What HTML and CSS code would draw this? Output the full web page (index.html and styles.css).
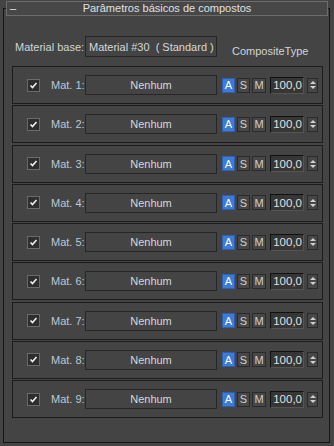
FILE: index.html
```html
<!DOCTYPE html>
<html>
<head>
<meta charset="utf-8">
<link rel="stylesheet" href="styles.css">
</head>
<body>
<div class="frame">
  <div class="title"><span class="dash">–</span><span class="title-text">Parâmetros básicos de compostos</span></div>
  <div class="base-row">
    <span class="base-label">Material base:</span>
    <span class="btn base-btn">Material #30 &nbsp;( Standard )</span>
    <span class="ctype">CompositeType</span>
  </div>
  <div class="list">
    <div class="row"><span class="chk"><svg viewBox="0 0 11 11" width="11" height="11"><polyline points="2.5,5.5 4.5,7.5 8.5,3" fill="none" stroke="#f0f0f0" stroke-width="1.6"/></svg></span><span class="lbl">Mat. 1:</span><span class="btn mat">Nenhum</span><span class="ab on">A</span><span class="ab">S</span><span class="ab m">M</span><span class="num">100,0</span><span class="spin"><i class="up"></i><i class="dn"></i></span></div>
    <div class="row"><span class="chk"><svg viewBox="0 0 11 11" width="11" height="11"><polyline points="2.5,5.5 4.5,7.5 8.5,3" fill="none" stroke="#f0f0f0" stroke-width="1.6"/></svg></span><span class="lbl">Mat. 2:</span><span class="btn mat">Nenhum</span><span class="ab on">A</span><span class="ab">S</span><span class="ab m">M</span><span class="num">100,0</span><span class="spin"><i class="up"></i><i class="dn"></i></span></div>
    <div class="row"><span class="chk"><svg viewBox="0 0 11 11" width="11" height="11"><polyline points="2.5,5.5 4.5,7.5 8.5,3" fill="none" stroke="#f0f0f0" stroke-width="1.6"/></svg></span><span class="lbl">Mat. 3:</span><span class="btn mat">Nenhum</span><span class="ab on">A</span><span class="ab">S</span><span class="ab m">M</span><span class="num">100,0</span><span class="spin"><i class="up"></i><i class="dn"></i></span></div>
    <div class="row"><span class="chk"><svg viewBox="0 0 11 11" width="11" height="11"><polyline points="2.5,5.5 4.5,7.5 8.5,3" fill="none" stroke="#f0f0f0" stroke-width="1.6"/></svg></span><span class="lbl">Mat. 4:</span><span class="btn mat">Nenhum</span><span class="ab on">A</span><span class="ab">S</span><span class="ab m">M</span><span class="num">100,0</span><span class="spin"><i class="up"></i><i class="dn"></i></span></div>
    <div class="row"><span class="chk"><svg viewBox="0 0 11 11" width="11" height="11"><polyline points="2.5,5.5 4.5,7.5 8.5,3" fill="none" stroke="#f0f0f0" stroke-width="1.6"/></svg></span><span class="lbl">Mat. 5:</span><span class="btn mat">Nenhum</span><span class="ab on">A</span><span class="ab">S</span><span class="ab m">M</span><span class="num">100,0</span><span class="spin"><i class="up"></i><i class="dn"></i></span></div>
    <div class="row"><span class="chk"><svg viewBox="0 0 11 11" width="11" height="11"><polyline points="2.5,5.5 4.5,7.5 8.5,3" fill="none" stroke="#f0f0f0" stroke-width="1.6"/></svg></span><span class="lbl">Mat. 6:</span><span class="btn mat">Nenhum</span><span class="ab on">A</span><span class="ab">S</span><span class="ab m">M</span><span class="num">100,0</span><span class="spin"><i class="up"></i><i class="dn"></i></span></div>
    <div class="row"><span class="chk"><svg viewBox="0 0 11 11" width="11" height="11"><polyline points="2.5,5.5 4.5,7.5 8.5,3" fill="none" stroke="#f0f0f0" stroke-width="1.6"/></svg></span><span class="lbl">Mat. 7:</span><span class="btn mat">Nenhum</span><span class="ab on">A</span><span class="ab">S</span><span class="ab m">M</span><span class="num">100,0</span><span class="spin"><i class="up"></i><i class="dn"></i></span></div>
    <div class="row"><span class="chk"><svg viewBox="0 0 11 11" width="11" height="11"><polyline points="2.5,5.5 4.5,7.5 8.5,3" fill="none" stroke="#f0f0f0" stroke-width="1.6"/></svg></span><span class="lbl">Mat. 8:</span><span class="btn mat">Nenhum</span><span class="ab on">A</span><span class="ab">S</span><span class="ab m">M</span><span class="num">100,0</span><span class="spin"><i class="up"></i><i class="dn"></i></span></div>
    <div class="row"><span class="chk"><svg viewBox="0 0 11 11" width="11" height="11"><polyline points="2.5,5.5 4.5,7.5 8.5,3" fill="none" stroke="#f0f0f0" stroke-width="1.6"/></svg></span><span class="lbl">Mat. 9:</span><span class="btn mat">Nenhum</span><span class="ab on">A</span><span class="ab">S</span><span class="ab m">M</span><span class="num">100,0</span><span class="spin"><i class="up"></i><i class="dn"></i></span></div>
  </div>
</div>
</body>
</html>
```
FILE: styles.css
```css
html, body {
  margin: 0;
  padding: 0;
  background: #444444;
}
body {
  font-family: "Liberation Sans", Arial, sans-serif;
  font-size: 11px;
  color: #d8d8d8;
  width: 334px;
  height: 446px;
  overflow: hidden;
}
.frame {
  box-sizing: border-box;
  margin: 8px 4px 0 3px;
  height: 435px;
  border: 1px solid #141414;
  padding: 0 6px 0 8px;
}
.title {
  box-sizing: border-box;
  height: 15px;
  margin: -8px -5px 0 -6px;
  border: 1px solid #6c6c6c;
  background: #474747;
  position: relative;
  display: flex;
  align-items: center;
  justify-content: center;
  font-size: 11px;
  color: #e0e0e0;
}
.dash {
  position: absolute;
  left: 3px;
  top: 0;
  line-height: 12px;
  color: #e8e8e8;
}
.title-text {
  line-height: 13px;
}
.base-row {
  margin-top: 20px;
  height: 21px;
  display: flex;
  align-items: stretch;
  margin-left: -8px;
}
.base-label {
  display: flex;
  align-items: center;
  padding-left: 11px;
  width: 70px;
  color: #d0d4d8;
}
.btn {
  box-sizing: border-box;
  border: 1px solid #262626;
  background: #444444;
  display: flex;
  align-items: center;
  justify-content: center;
  color: #d4d8dc;
}
.base-btn {
  width: 132px;
  justify-content: flex-start;
  padding-left: 3px;
  white-space: nowrap;
}
.ctype {
  display: flex;
  align-items: flex-end;
  margin-left: 15px;
  color: #d0d4d8;
}
.list {
  margin-top: 9px;
  display: flex;
  flex-direction: column;
  gap: 1.25px;
}
.row {
  box-sizing: border-box;
  height: 38px;
  border: 1px solid #1c1c1c;
  display: flex;
  align-items: center;
  padding-left: 14px;
}
.chk {
  box-sizing: border-box;
  width: 13px;
  height: 13px;
  border: 1px solid #6a6a6a;
  background: #2e2e2e;
  display: flex;
  align-items: center;
  justify-content: center;
}
.chk svg { display: block; }
.lbl {
  margin-left: 11px;
  width: 34px;
  color: #bcc8d4;
  white-space: nowrap;
}
.mat {
  width: 132px;
  height: 20px;
}
.ab {
  box-sizing: border-box;
  width: 13px;
  height: 15px;
  margin-left: 2px;
  border: 1px solid #2a2a2a;
  background: #474747;
  display: flex;
  align-items: center;
  justify-content: center;
  color: #d0d0d0;
  font-size: 11px;
}
.ab.on {
  margin-left: 5px;
  background: #3d7bd9;
  border-color: #2f5fae;
  color: #ffffff;
}
.ab.m { width: 14px; }
.num {
  box-sizing: border-box;
  margin-left: 4px;
  width: 34px;
  height: 17px;
  background: #363636;
  border-top: 1px solid #111;
  border-left: 1px solid #111;
  border-right: 1px solid #555;
  border-bottom: 1px solid #555;
  display: flex;
  align-items: center;
  justify-content: flex-end;
  padding-right: 1px;
  color: #e0e0e0;
  font-size: 11.5px;
}
.spin {
  box-sizing: border-box;
  margin-left: 3px;
  width: 11px;
  height: 15px;
  border: 1px solid #2a2a2a;
  background: #474747;
  display: flex;
  flex-direction: column;
  align-items: center;
  justify-content: center;
  gap: 2px;
}
.spin i {
  display: block;
  width: 0;
  height: 0;
  border-left: 3px solid transparent;
  border-right: 3px solid transparent;
}
.spin .up { border-bottom: 3px solid #d0d0d0; }
.spin .dn { border-top: 3px solid #d0d0d0; }
```
